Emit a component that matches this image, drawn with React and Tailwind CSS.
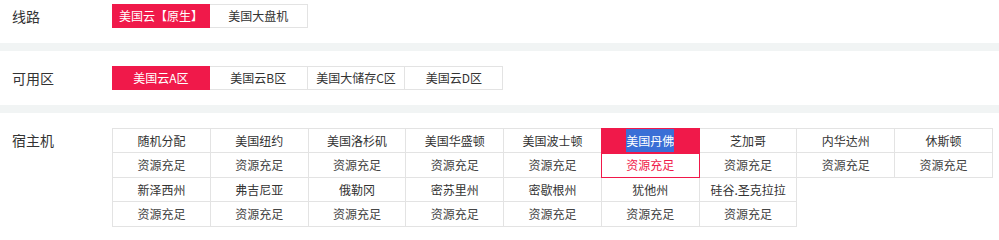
import React from 'react';

const RED = 'bg-[#f0194a]';

const hosts = [
  '随机分配', '美国纽约', '美国洛杉矶', '美国华盛顿', '美国波士顿', '美国丹佛', '芝加哥', '内华达州', '休斯顿',
  '新泽西州', '弗吉尼亚', '俄勒冈', '密苏里州', '密歇根州', '犹他州', '硅谷.圣克拉拉',
];

const Segmented = ({ items, active }) => (
  <div className="flex">
    {items.map((item, i) => (
      <div
        key={item}
        className={`w-[97.8px] h-[24px] flex items-center justify-center text-[12px] border ${i > 0 ? 'border-l-0' : ''} ${
          i === active ? `${RED} border-[#f0194a] text-white` : 'bg-white border-[#e3e3e3] text-[#333]'
        }`}
      >
        {item}
      </div>
    ))}
  </div>
);

const Row = ({ label, children, className = '' }) => (
  <div className={`flex bg-white ${className}`}>
    <div className="w-[112px] pl-[12px] h-[24px] flex items-center text-[14px] text-[#333] shrink-0">{label}</div>
    {children}
  </div>
);

const Band = () => <div className="h-[8px] bg-[#f1f4f4]" />;

export default function App() {
  return (
    <div
      className="w-[999px] h-[240px] bg-white overflow-hidden"
      style={{ fontFamily: '"Noto Sans CJK SC", "Liberation Sans", sans-serif' }}
    >
      <Row label="线路" className="pt-[4px] pb-[15px]">
        <Segmented items={['美国云【原生】', '美国大盘机']} active={0} />
      </Row>
      <Band />
      <Row label="可用区" className="py-[15px]">
        <Segmented items={['美国云A区', '美国云B区', '美国大储存C区', '美国云D区']} active={0} />
      </Row>
      <Band />
      <Row label="宿主机" className="pt-[15px]">
        <div className="grid grid-cols-9 w-[881px] border-l border-t border-[#e3e3e3]">
          {hosts.map((name) => {
            const sel = name === '美国丹佛';
            return (
              <div key={name} className="border-r border-b border-[#e3e3e3] text-[12px]">
                <div
                  className={`h-[24px] flex items-center justify-center border-b border-[#e3e3e3] ${
                    sel ? `${RED} text-white relative z-10 outline outline-[#f0194a]` : 'text-[#333]'
                  }`}
                >
                  {sel ? <span className="bg-[#3a6fd6] leading-[24px]">{name}</span> : name}
                </div>
                <div
                  className={`h-[24px] flex items-center justify-center ${
                    sel ? 'text-[#f0194a] relative z-10 outline outline-[#f0194a]' : 'text-[#444]'
                  }`}
                >
                  资源充足
                </div>
              </div>
            );
          })}
        </div>
      </Row>
    </div>
  );
}
